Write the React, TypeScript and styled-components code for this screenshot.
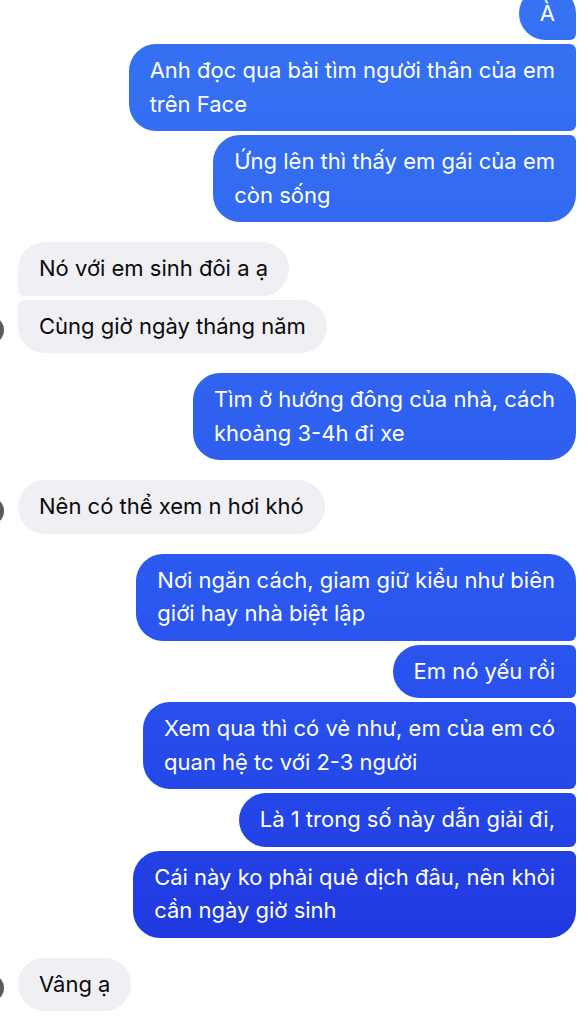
import React from "react";
import styled, { createGlobalStyle, css } from "styled-components";

const Global = createGlobalStyle`
  html, body { margin: 0; padding: 0; background: #ffffff; }
  body { font-family: Inter, "Noto Sans", "Liberation Sans", sans-serif; -webkit-font-smoothing: antialiased; }
  #root { width: 588px; height: 1024px; overflow: hidden; }
`;

const Thread = styled.div`
  display: flex;
  flex-direction: column;
  padding: 0 12px 0 0;
  margin-top: -13.5px;
`;

const Group = styled.div<{ $side: "in" | "out" }>`
  display: flex;
  flex-direction: column;
  align-items: ${(p) => (p.$side === "out" ? "flex-end" : "flex-start")};
  gap: 4px;
  margin-bottom: 20px;
`;

const Row = styled.div`
  display: flex;
  align-items: center;
  gap: 14px;
`;

const AvatarSlot = styled.div<{ $show: boolean }>`
  width: 28px;
  height: 28px;
  margin-left: -24px;
  margin-top: 8px;
  border-radius: 50%;
  flex-shrink: 0;
  background: ${(p) => (p.$show ? "#5a5a5e" : "transparent")};
`;

type Pos = "single" | "first" | "middle" | "last";

const big = 27;
const small = 6;

const radius = (side: "in" | "out", pos: Pos) => {
  const top = pos === "single" || pos === "first" ? big : small;
  const bottom = pos === "single" || pos === "last" ? big : small;
  if (side === "out") return `${big}px ${top}px ${bottom}px ${big}px`;
  return `${top}px ${big}px ${big}px ${bottom}px`;
};

const Bubble = styled.div<{ $side: "in" | "out"; $pos: Pos }>`
  padding: 10px 21px;
  font-size: 22px;
  line-height: 33.5px;
  letter-spacing: 0;
  border-radius: ${(p) => radius(p.$side, p.$pos)};
  ${(p) =>
    p.$side === "out"
      ? css`
          color: #ffffff;
          background: linear-gradient(180deg, #3672f2 0px, #3167f1 300px, #2a55ef 650px, #1c30dc 1024px);
          background-attachment: fixed;
        `
      : css`
          color: #0a0a0a;
          background: #efeff4;
        `}
`;

const Line = styled.span`
  display: block;
  white-space: nowrap;
`;

type Msg = { lines: string[] };
type G = { side: "in" | "out"; msgs: Msg[] };

const groups: G[] = [
  {
    side: "out",
    msgs: [
      { lines: ["À"] },
      { lines: ["Anh đọc qua bài tìm người thân của em", "trên Face"] },
      { lines: ["Ứng lên thì thấy em gái của em", "còn sống"] },
    ],
  },
  {
    side: "in",
    msgs: [{ lines: ["Nó với em sinh đôi a ạ"] }, { lines: ["Cùng giờ ngày tháng năm"] }],
  },
  {
    side: "out",
    msgs: [{ lines: ["Tìm ở hướng đông của nhà, cách", "khoảng 3-4h đi xe"] }],
  },
  { side: "in", msgs: [{ lines: ["Nên có thể xem n hơi khó"] }] },
  {
    side: "out",
    msgs: [
      { lines: ["Nơi ngăn cách, giam giữ kiểu như biên", "giới hay nhà biệt lập"] },
      { lines: ["Em nó yếu rồi"] },
      { lines: ["Xem qua thì có vẻ như, em của em có", "quan hệ tc với 2-3 người"] },
      { lines: ["Là 1 trong số này dẫn giải đi,"] },
      { lines: ["Cái này ko phải quẻ dịch đâu, nên khỏi", "cần ngày giờ sinh"] },
    ],
  },
  { side: "in", msgs: [{ lines: ["Vâng ạ"] }] },
];

const posOf = (i: number, n: number): Pos =>
  n === 1 ? "single" : i === 0 ? "first" : i === n - 1 ? "last" : "middle";

export default function App() {
  return (
    <>
      <Global />
      <Thread>
        {groups.map((g, gi) => (
          <Group key={gi} $side={g.side}>
            {g.msgs.map((m, i) => {
              const pos = posOf(i, g.msgs.length);
              const bubble = (
                <Bubble $side={g.side} $pos={pos}>
                  {m.lines.map((l, li) => (
                    <Line key={li}>{l}</Line>
                  ))}
                </Bubble>
              );
              if (g.side === "out") return <React.Fragment key={i}>{bubble}</React.Fragment>;
              const last = i === g.msgs.length - 1;
              return (
                <Row key={i}>
                  <AvatarSlot $show={last} />
                  {bubble}
                </Row>
              );
            })}
          </Group>
        ))}
      </Thread>
    </>
  );
}
